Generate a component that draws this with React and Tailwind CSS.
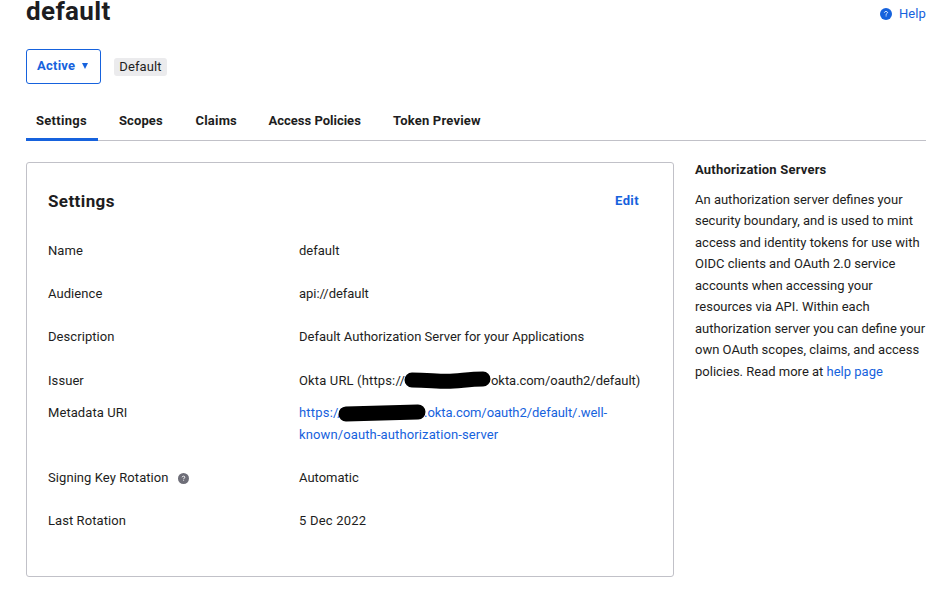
const tabs = [
  { label: 'Settings', active: true, cls: 'w-[72px] pl-[10px] tracking-[0.3px]' },
  { label: 'Scopes', cls: 'w-[76px] pl-[21px] tracking-[0.1px]' },
  { label: 'Claims', cls: 'w-[73px] pl-[21.5px]' },
  { label: 'Access Policies', cls: 'w-[125px] pl-[21.5px] tracking-[0px]' },
  { label: 'Token Preview', cls: 'w-[120px] pl-[21px]' },
];

function HelpIcon({ className }) {
  return (
    <svg className={className} viewBox="0 0 11 11" fill="none">
      <circle cx="5.5" cy="5.5" r="5.5" fill="currentColor" />
      <path d="M4.1 4.3C4.1 3.6 4.7 3.2 5.5 3.2C6.3 3.2 6.9 3.6 6.9 4.2C6.9 5 5.6 5 5.6 6.1" stroke="#fff" strokeWidth="0.9" />
      <path d="M5.6 6.8V7.7" stroke="#fff" strokeWidth="0.9" />
    </svg>
  );
}

function Row({ label, className, children }) {
  return (
    <div className={`flex leading-[21.6px] ${className}`}>
      <div className="flex w-[251px] shrink-0 items-start tracking-[0.07px]">{label}</div>
      <div className="whitespace-nowrap">{children}</div>
    </div>
  );
}

export default function App() {
  return (
    <div className="h-[593px] w-[944px] overflow-hidden bg-white pl-[26px] pr-[18px] font-['Roboto',sans-serif] text-[13px] text-[#1d1d21]">
      <header className="flex h-[49px] items-start justify-between">
        <h1 className="-mt-[5px] text-[26px] font-bold leading-[32px] tracking-[0.35px]">default</h1>
        <a className="mt-[3px] flex items-center gap-[7px] leading-[21px] text-[#1662dd]">
          <HelpIcon className="h-[12px] w-[12px]" />
          <span className="tracking-[0.1px]">Help</span>
        </a>
      </header>

      <div className="flex h-[35px] items-center gap-[13px]">
        <button className="flex h-[35px] w-[75px] items-center gap-[7px] rounded-[3px] border border-[#1662dd] pb-[1px] pl-[10px] font-bold tracking-[0.25px] text-[#1662dd]">
          <span>Active</span>
          <svg className="h-[6px] w-[6px]" viewBox="0 0 6 6"><path d="M0 0H6L3 6Z" fill="currentColor" /></svg>
        </button>
        <span className="flex h-[18px] w-[53px] items-center justify-center rounded-[3px] bg-[#ebebed] tracking-[0.1px]">Default</span>
      </div>

      <nav className="mt-[16px] flex h-[41px] border-b border-[#c1c1c8] font-bold tracking-[0.2px]">
        {tabs.map((t) => (
          <div key={t.label} className={`box-border h-[41px] whitespace-nowrap pt-[10px] leading-[21px] ${t.cls} ${t.active ? 'border-b-[3px] border-[#1662dd]' : ''}`}>
            {t.label}
          </div>
        ))}
      </nav>

      <main className="flex items-start gap-[21px] pt-[21px]">
        <section className="h-[415px] w-[648px] shrink-0 rounded-[3px] border border-[#c1c1c8] pl-[21px] pr-[34px]">
          <div className="flex h-[77px] items-start justify-between pt-[26px] leading-[24px]">
            <h2 className="text-[17px] font-bold tracking-[0.4px]">Settings</h2>
            <a className="font-bold tracking-[0.4px] text-[#1662dd]">Edit</a>
          </div>
          <Row label="Name" className="h-[43px]">default</Row>
          <Row label="Audience" className="h-[43px]"><span className="-tracking-[0.05px]">api://default</span></Row>
          <Row label="Description" className="h-[44px]">Default Authorization Server for your Applications</Row>
          <Row label="Issuer" className="h-[32px]">
            <span className="flex">
              <span className="w-[106px] tracking-[0.15px]">Okta URL (https://</span>
              <svg className="mt-[1px] -ml-[2px] h-[18px] w-[88px]" viewBox="0 0 88 18">
                <path d="M9 9C25 9 32 10.3 44 10.3C56 10.3 65 8 80 8" fill="none" stroke="#000" strokeWidth="15" strokeLinecap="round" />
              </svg>
              <span className="-tracking-[0.05px]">okta.com/oauth2/default)</span>
            </span>
          </Row>
          <Row label="Metadata URI" className="h-[65px]">
            <a className="block text-[#1662dd]">
              <span className="flex">
                <span className="w-[40px] tracking-[0.2px]">https://</span>
                <svg className="mt-[2px] -ml-[1px] h-[18px] w-[88px]" viewBox="0 0 88 18">
                  <path d="M8 10C30 9.5 55 8.5 80 8" fill="none" stroke="#000" strokeWidth="15" strokeLinecap="round" />
                </svg>
                <span className="-ml-[2px] -tracking-[0.05px]">.okta.com/oauth2/default/.well-</span>
              </span>
              <span className="block tracking-[0.12px]">known/oauth-authorization-server</span>
            </a>
          </Row>
          <Row
            label={<><span className="w-[130px]">Signing Key Rotation</span><HelpIcon className="mt-[6px] h-[11px] w-[11px] text-[#6e6e78]" /></>}
            className="h-[43px]"
          >
            Automatic
          </Row>
          <Row label="Last Rotation" className="h-[43px]"><span className="tracking-[0.2px]">5 Dec 2022</span></Row>
        </section>

        <aside className="w-[235px] -mr-[4px] whitespace-nowrap pt-px leading-[21.55px]">
          <h3 className="-mt-[4px] mb-[8px] font-bold tracking-[0.2px]">Authorization Servers</h3>
          <p>
            An authorization server defines your<br />
            security boundary, and is used to mint<br />
            access and identity tokens for use with<br />
            OIDC clients and OAuth 2.0 service<br />
            accounts when accessing your<br />
            resources via API. Within each<br />
            authorization server you can define your<br />
            own OAuth scopes, claims, and access<br />
            policies. Read more at <a className="text-[#1662dd]">help page</a>
          </p>
        </aside>
      </main>
    </div>
  );
}
